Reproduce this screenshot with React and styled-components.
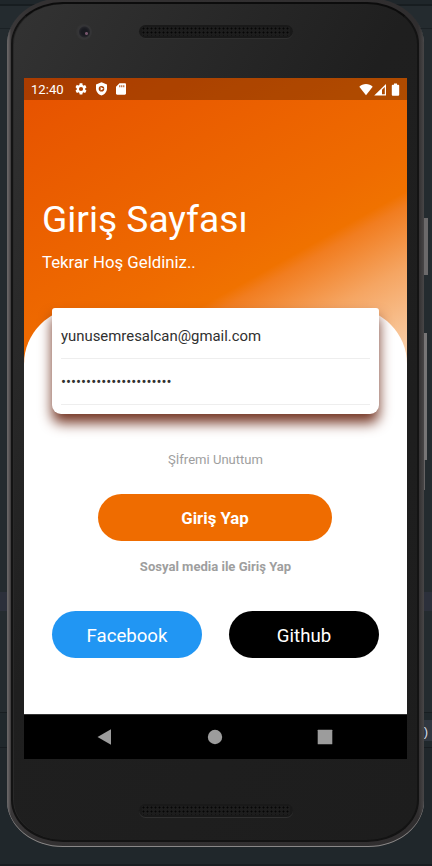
import React from "react";
import styled, { createGlobalStyle } from "styled-components";

const GlobalStyle = createGlobalStyle`
  *, *::before, *::after { box-sizing: border-box; }
  body { margin: 0; overflow: hidden; font-family: Roboto, sans-serif; }
`;

const Desktop = styled.div`
  position: relative;
  width: 432px;
  height: 866px;
  overflow: hidden;
  display: flex;
  align-items: flex-start;
  background: linear-gradient(
    to bottom,
    #1f262a 0 4px, #171d20 4px 6px, #242b2f 6px 28px, #1b2125 28px 29px,
    #242b2f 29px 592px, #2c303b 592px 611px, #242b2f 611px 712px,
    #181e21 712px 713px, #20282c 713px 747px, #181d21 747px 748px,
    #20272b 748px 864px, #181d21 864px 866px
  );
`;

const EditorTab = styled.div`
  position: absolute;
  left: 418px;
  top: 720px;
  width: 14px;
  height: 21px;
  padding-right: 4px;
  background: #303740;
  color: #d5dde8;
  font: 13px/24px "Liberation Sans", sans-serif;
  text-align: right;
`;

const SideKey = styled.div`
  position: absolute;
  left: 424px;
  top: ${(p) => p.$top}px;
  width: ${(p) => p.$width}px;
  height: ${(p) => p.$height}px;
  background: ${(p) => p.$color};
`;

const Phone = styled.div`
  position: relative;
  margin: -2px 0 0 7px;
  width: 417px;
  height: 849px;
  padding: 4px 5px 5px 4px;
  border-radius: 56px / 46px;
  background: linear-gradient(to right, #6c6969 0, #5b5859 2px, #3a3839 4px, #333132 30px, #302e2f 411px, #3b393a 414px, #484647 417px);
  box-shadow: inset 0 -1px 0 #8a8888;
`;

const Face = styled.div`
  height: 100%;
  padding: 0 10px 0 11px;
  border: 2px solid #131313;
  border-top-color: #0c0c0c;
  border-radius: 52px / 42px;
  background: linear-gradient(120deg, #333 0%, #2b2b2b 18%, #1f1f1f 45%, #1d1d1d 100%);
  box-shadow: inset 1px 0 0 #292929;
`;

const Bezel = styled.div`
  display: grid;
  grid-template-columns: 115px 154px;
  height: ${(p) => p.$height}px;
  padding-top: ${(p) => p.$offset}px;
  align-items: start;
`;

const Camera = styled.div`
  width: 16px;
  height: 16px;
  margin: -1px 0 0 52px;
  border-radius: 50%;
  background:
    radial-gradient(circle at 10.5px 9.5px, #75556b 0 1px, transparent 2px),
    radial-gradient(circle at 8.5px 8px, #191a20 0 3px, #242429 5px, #353537 6px, #333 8px);
`;

const Speaker = styled.div`
  grid-column: 2;
  height: 13px;
  padding: 2px 3px;
  border-radius: 7px;
  background: #191919;
  box-shadow: 0 1px 0 #303030;
  &::before {
    content: "";
    display: block;
    height: 9px;
    background: radial-gradient(circle at 1.5px 1.5px, #060606 0 0.7px, #1d1d1d 1.3px) 0 0 / 4px 4px;
  }
`;

const Screen = styled.div`
  width: 383px;
  height: 681px;
  display: flex;
  flex-direction: column;
  background: linear-gradient(150.65deg, #e65100 0%, #ef6c00 32%, #f07200 36.6%, #f17d20 38.2%, #f5a562 45%, #f9cda5 54%, #fff 68%);
`;

const StatusBar = styled.div`
  height: 22px;
  flex: none;
  display: flex;
  align-items: center;
  padding: 0 6px 0 7px;
  background: rgba(0, 0, 0, 0.26);
  color: #fff;
  font-size: 13.1px;
  svg { display: block; }
`;

const Clock = styled.span`
  width: 43px;
  line-height: 22px;
  padding-top: 1px;
`;

const Notices = styled.div`
  display: flex;
  gap: 6.5px;
  flex: 1;
`;

const Signals = styled.div`
  display: flex;
  align-items: center;
  svg:last-child { margin-left: 3px; }
`;

const Header = styled.header`
  height: 208px;
  flex: none;
  padding: 98px 18px 0;
  color: #fff;
`;

const Title = styled.h1`
  margin: 0 0 9.5px;
  font-size: 37.15px;
  line-height: 44px;
  font-weight: 400;
`;

const Subtitle = styled.p`
  margin: 0;
  font-size: 16.8px;
  line-height: 20px;
`;

const Sheet = styled.main`
  flex: 1;
  display: flex;
  flex-direction: column;
  align-items: center;
  padding: 0 28px;
  background: #fff;
  border-radius: 56px 56px 0 0;
`;

const Card = styled.div`
  width: 327px;
  height: 106px;
  padding: 0 9px;
  flex: none;
  background: #fff;
  border-radius: 3px 3px 9px 9px;
  box-shadow: 0 9px 13px #753725;
`;

const Field = styled.div`
  height: ${(p) => p.$height}px;
  padding-top: ${(p) => p.$offset}px;
  border-bottom: 1px solid #eee;
  color: #303030;
  font-size: 14.9px;
  line-height: 18px;
`;

const Forgot = styled.a`
  margin-top: 38px;
  color: #9e9e9e;
  font-size: 13.05px;
  line-height: 16px;
`;

const Caption = styled.p`
  margin: 18px 0 36px;
  color: #9e9e9e;
  font-size: 13.05px;
  font-weight: 700;
  line-height: 16px;
`;

const PillButton = styled.button`
  width: ${(p) => p.$width}px;
  height: 47px;
  flex: none;
  padding: 2px 0 0;
  border: 0;
  border-radius: 24px;
  background: ${(p) => p.$color};
  color: #fff;
  font: ${(p) => (p.$strong ? "700 16.8px" : "400 18.64px")} Roboto, sans-serif;
`;

const LoginButton = styled(PillButton)`
  margin: 26px 1px 0 0;
  padding-top: 0;
`;

const SocialRow = styled.div`
  width: 327px;
  display: flex;
  justify-content: space-between;
`;

const NavBar = styled.nav`
  height: 45px;
  flex: none;
  display: grid;
  grid-template-columns: repeat(3, 110.5px);
  justify-content: center;
  justify-items: center;
  align-items: center;
  padding-right: 2px;
  border-top: 1px solid #333;
  background: #000;
  svg { display: block; fill: #9c9c9c; }
`;

const GearIcon = () => (
  <svg width="14" height="14" viewBox="0 0 24 24" fill="#fff">
    <path d="M19.14 12.94c.04-.3.06-.61.06-.94s-.02-.64-.07-.94l2.03-1.58a.49.49 0 0 0 .12-.61l-1.92-3.32a.49.49 0 0 0-.59-.22l-2.39.96a7 7 0 0 0-1.62-.94l-.36-2.54A.48.48 0 0 0 13.92 2h-3.84a.48.48 0 0 0-.48.41l-.36 2.54c-.59.24-1.13.57-1.62.94l-2.39-.96a.49.49 0 0 0-.59.22L2.72 8.47a.49.49 0 0 0 .12.61l2.03 1.98c-.05.3-.07.62-.07.94s.02.64.07.94l-2.03 1.58a.49.49 0 0 0-.12.61l1.92 3.32c.12.22.37.29.59.22l2.39-.96c.5.38 1.03.7 1.62.94l.36 2.54c.05.24.24.41.48.41h3.84c.24 0 .44-.17.47-.41l.36-2.54a7 7 0 0 0 1.62-.94l2.39.96c.22.08.47 0 .59-.22l1.92-3.32a.49.49 0 0 0-.12-.61zM12 15.6a3.6 3.6 0 1 1 0-7.2 3.6 3.6 0 0 1 0 7.2z" />
  </svg>
);

const ShieldIcon = () => (
  <svg width="13" height="14" viewBox="0 0 13 14">
    <path fill="#fff" fillRule="evenodd" d="M6.5.3 12 2.500v4.100c0 3.200-2.200 5.900-5.500 7C3.200 12.500 1 9.800 1 6.600V2.500zM6.500 4a2.800 2.800 0 1 0 0 5.600 2.800 2.800 0 0 0 0-5.600z" />
    <path fill="#fff" d="M5.600 5v3.600L8.600 6.800z" />
  </svg>
);

const CardIcon = () => (
  <svg width="14" height="14" viewBox="0 0 14 14">
    <path fill="#fff" fillRule="evenodd" d="M5.500 1.200h5.300c.7 0 1.200.5 1.200 1.200v9.200c0 .7-.5 1.200-1.200 1.200H3.200c-.7 0-1.200-.5-1.200-1.200V4.700zM5.300 3.200v2h1v-2zm2 0v2h1v-2zm2 0v2h1v-2z" />
  </svg>
);

const WifiIcon = () => (
  <svg width="14" height="13" viewBox="0 0 14 13">
    <path fill="#fff" d="M7 12.300.3 3.800C2.100 2.100 4.400 1.100 7 1.100s4.900 1 6.700 2.700z" />
  </svg>
);

const SignalIcon = () => (
  <svg width="14" height="13" viewBox="0 0 14 13">
    <path fill="#fff" fillRule="evenodd" d="M13 1v11.500H1.200zM11.800 4 9 6.700v4.600h2.800z" />
  </svg>
);

const BatteryIcon = () => (
  <svg width="11" height="13" viewBox="0 0 11 13">
    <path fill="#fff" d="M4 .5h3v1.200h1.300c.5 0 .9.400.9.900v9.200c0 .5-.4.900-.9.900H2.700c-.5 0-.9-.4-.9-.9V2.600c0-.5.4-.9.900-.9H4z" />
  </svg>
);

export default function App() {
  return (
    <>
      <GlobalStyle />
      <Desktop>
        <EditorTab>)</EditorTab>
        <SideKey $top={218} $width={4} $height={57} $color="#6b696a" />
        <SideKey $top={333} $width={3} $height={127} $color="#777576" />
        <SideKey $top={460} $width={1} $height={30} $color="#656364" />
        <Phone>
          <Face>
            <Bezel $height={74} $offset={21}>
              <Camera />
              <Speaker />
            </Bezel>
            <Screen>
              <StatusBar>
                <Clock>12:40</Clock>
                <Notices>
                  <GearIcon />
                  <ShieldIcon />
                  <CardIcon />
                </Notices>
                <Signals>
                  <WifiIcon />
                  <SignalIcon />
                  <BatteryIcon />
                </Signals>
              </StatusBar>
              <Header>
                <Title>Giriş Sayfası</Title>
                <Subtitle>Tekrar Hoş Geldiniz..</Subtitle>
              </Header>
              <Sheet>
                <Card>
                  <Field $height={51} $offset={19}>yunusemresalcan@gmail.com</Field>
                  <Field $height={46} $offset={14}>{"•".repeat(22)}</Field>
                </Card>
                <Forgot>Şİfremi Unuttum</Forgot>
                <LoginButton $width={234} $color="#ef6c00" $strong>Giriş Yap</LoginButton>
                <Caption>Sosyal media ile Giriş Yap</Caption>
                <SocialRow>
                  <PillButton $width={150} $color="#2196f3">Facebook</PillButton>
                  <PillButton $width={150} $color="#000">Github</PillButton>
                </SocialRow>
              </Sheet>
              <NavBar>
                <svg width="16" height="16" viewBox="0 0 16 16"><path d="M1.500 8 15 .3v15.400z" /></svg>
                <svg width="16" height="16" viewBox="0 0 16 16"><circle cx="8" cy="8" r="7.200" /></svg>
                <svg width="16" height="16" viewBox="0 0 16 16"><rect x=".7" y=".7" width="14.600" height="14.600" rx=".5" /></svg>
              </NavBar>
            </Screen>
            <Bezel $height={79} $offset={45}>
              <Speaker />
            </Bezel>
          </Face>
        </Phone>
      </Desktop>
    </>
  );
}
